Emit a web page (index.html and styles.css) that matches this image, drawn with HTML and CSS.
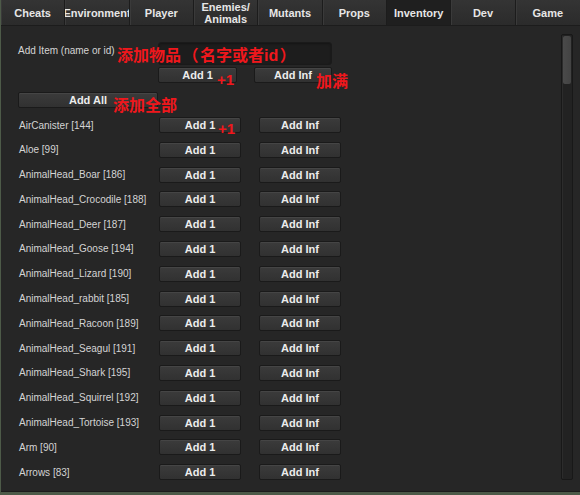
FILE: index.html
```html
<!DOCTYPE html>
<html>
<head>
<meta charset="utf-8">
<link rel="stylesheet" href="styles.css">
</head>
<body>
<div class="window">
  <div class="tabs">
    <div class="tab">Cheats</div>
    <div class="tab">Environment</div>
    <div class="tab">Player</div>
    <div class="tab two">Enemies/<br>Animals</div>
    <div class="tab">Mutants</div>
    <div class="tab">Props</div>
    <div class="tab active">Inventory</div>
    <div class="tab">Dev</div>
    <div class="tab">Game</div>
  </div>
  <div class="body">
    <div class="content">
      <div class="top">
        <div class="label top-label">Add Item (name or id)</div>
        <div class="field"></div>
        <div class="btn b-add1">Add 1</div>
        <div class="btn b-addinf">Add Inf</div>
        <div class="btn b-all">Add All</div>
      </div>
      <div class="list">
        <div class="label">AirCanister [144]</div><div class="btn">Add 1</div><div class="btn c3">Add Inf</div>
        <div class="label">Aloe [99]</div><div class="btn">Add 1</div><div class="btn c3">Add Inf</div>
        <div class="label">AnimalHead_Boar [186]</div><div class="btn">Add 1</div><div class="btn c3">Add Inf</div>
        <div class="label">AnimalHead_Crocodile [188]</div><div class="btn">Add 1</div><div class="btn c3">Add Inf</div>
        <div class="label">AnimalHead_Deer [187]</div><div class="btn">Add 1</div><div class="btn c3">Add Inf</div>
        <div class="label">AnimalHead_Goose [194]</div><div class="btn">Add 1</div><div class="btn c3">Add Inf</div>
        <div class="label">AnimalHead_Lizard [190]</div><div class="btn">Add 1</div><div class="btn c3">Add Inf</div>
        <div class="label">AnimalHead_rabbit [185]</div><div class="btn">Add 1</div><div class="btn c3">Add Inf</div>
        <div class="label">AnimalHead_Racoon [189]</div><div class="btn">Add 1</div><div class="btn c3">Add Inf</div>
        <div class="label">AnimalHead_Seagul [191]</div><div class="btn">Add 1</div><div class="btn c3">Add Inf</div>
        <div class="label">AnimalHead_Shark [195]</div><div class="btn">Add 1</div><div class="btn c3">Add Inf</div>
        <div class="label">AnimalHead_Squirrel [192]</div><div class="btn">Add 1</div><div class="btn c3">Add Inf</div>
        <div class="label">AnimalHead_Tortoise [193]</div><div class="btn">Add 1</div><div class="btn c3">Add Inf</div>
        <div class="label">Arm [90]</div><div class="btn">Add 1</div><div class="btn c3">Add Inf</div>
        <div class="label">Arrows [83]</div><div class="btn">Add 1</div><div class="btn c3">Add Inf</div>
      </div>
    </div>
    <div class="scrollbar"><div class="thumb"></div></div>
    <div class="note n1">添加物品<span class="paren">（</span>名字或者id<span class="paren">）</span></div>
    <div class="note n2">+1</div>
    <div class="note n3">加满</div>
    <div class="note n4">添加全部</div>
    <div class="note n5">+1</div>
  </div>
</div>
</body>
</html>
```
FILE: styles.css
```css
html, body {
  margin: 0;
  padding: 0;
}
body {
  width: 580px;
  height: 495px;
  background: #4d5a48;
  font-family: "Liberation Sans", Arial, sans-serif;
  overflow: hidden;
}
.window {
  margin-left: 1px;
  width: 579px;
  height: 492px;
  background: #262626;
  overflow: hidden;
  border-bottom: 1px solid #1c1c1c;
  box-sizing: border-box;
}
.tabs {
  display: grid;
  grid-template-columns: repeat(9, 1fr);
  height: 26px;
  background: #2c2c2c;
  border-bottom: 1px solid #1c1c1c;
  box-sizing: border-box;
}
.tab {
  display: flex;
  align-items: center;
  justify-content: center;
  text-align: center;
  color: #e6e6e6;
  font-weight: bold;
  font-size: 11px;
  line-height: 12px;
  background: linear-gradient(#343434, #2b2b2b);
  border-right: 1px solid #1c1c1c;
  box-shadow: inset 1px 0 0 #3a3a3a;
  white-space: nowrap;
  overflow: hidden;
  padding-top: 1px;
}
.tab:last-child { border-right: none; }
.tab.active {
  background: #1f1f1f;
  box-shadow: none;
}
.body {
  position: relative;
  height: 466px;
}
.content {
  padding: 16px 0 0 17px;
}
.top {
  display: grid;
  grid-template-columns: 140px 79px 17px 78px;
  grid-template-rows: 23px 16px 16px;
  row-gap: 2px;
}
.top-label {
  grid-column: 1;
  grid-row: 1;
  align-self: start;
  padding-top: 3px;
}
.field {
  grid-column: 2 / 5;
  grid-row: 1;
  background: #1d1d1d;
  border: 1px solid #1a1a1a;
  border-radius: 3px;
  box-shadow: inset 0 1px 2px #151515;
}
.b-add1 { grid-column: 2; grid-row: 2; }
.b-addinf { grid-column: 4; grid-row: 2; }
.b-all {
  grid-column: 1;
  grid-row: 3;
  margin-top: 7px;
  height: 16px;
}
.label {
  color: #d4d4d4;
  font-size: 10px;
  white-space: nowrap;
}
.btn {
  display: flex;
  align-items: center;
  justify-content: center;
  box-sizing: border-box;
  height: 16px;
  background: linear-gradient(#3b3b3b, #313131);
  border: 1px solid #1a1a1a;
  border-radius: 2px;
  box-shadow: inset 0 1px 0 #454545;
  color: #ececec;
  font-weight: bold;
  font-size: 11px;
}
.list {
  margin-top: 16px;
  display: grid;
  grid-template-columns: 141px 82px 18px 82px;
  grid-auto-rows: 16px;
  row-gap: 8.8px;
  align-items: center;
}
.list .label { grid-column: 1; padding-left: 1px; }
.list .c3 { grid-column: 4; }
.scrollbar {
  position: absolute;
  left: 560px;
  top: 8px;
  width: 12px;
  height: 446px;
  box-sizing: border-box;
  background: #222;
  border: 1px solid #181818;
  border-radius: 2px;
  box-shadow: inset 1px 0 0 #2c2c2c;
}
.thumb {
  margin: 1px 0 0 1px;
  width: 8px;
  height: 48px;
  background: linear-gradient(90deg, #4a4a4a, #434343);
  border-radius: 2px;
}
.note {
  position: absolute;
  color: #f0171c;
  font-family: "Liberation Sans", "Noto Sans CJK SC", sans-serif;
  font-weight: bold;
  font-size: 16px;
  line-height: 16px;
  white-space: nowrap;
}
.paren {
  display: inline-block;
  width: 19px;
  text-align: center;
}
.n1 { left: 116px; top: 22px; }
.n2 { left: 216px; top: 46px; font-size: 15px; }
.n3 { left: 315px; top: 48px; }
.n4 { left: 112px; top: 72px; }
.n5 { left: 217px; top: 95px; font-size: 15px; }
```
